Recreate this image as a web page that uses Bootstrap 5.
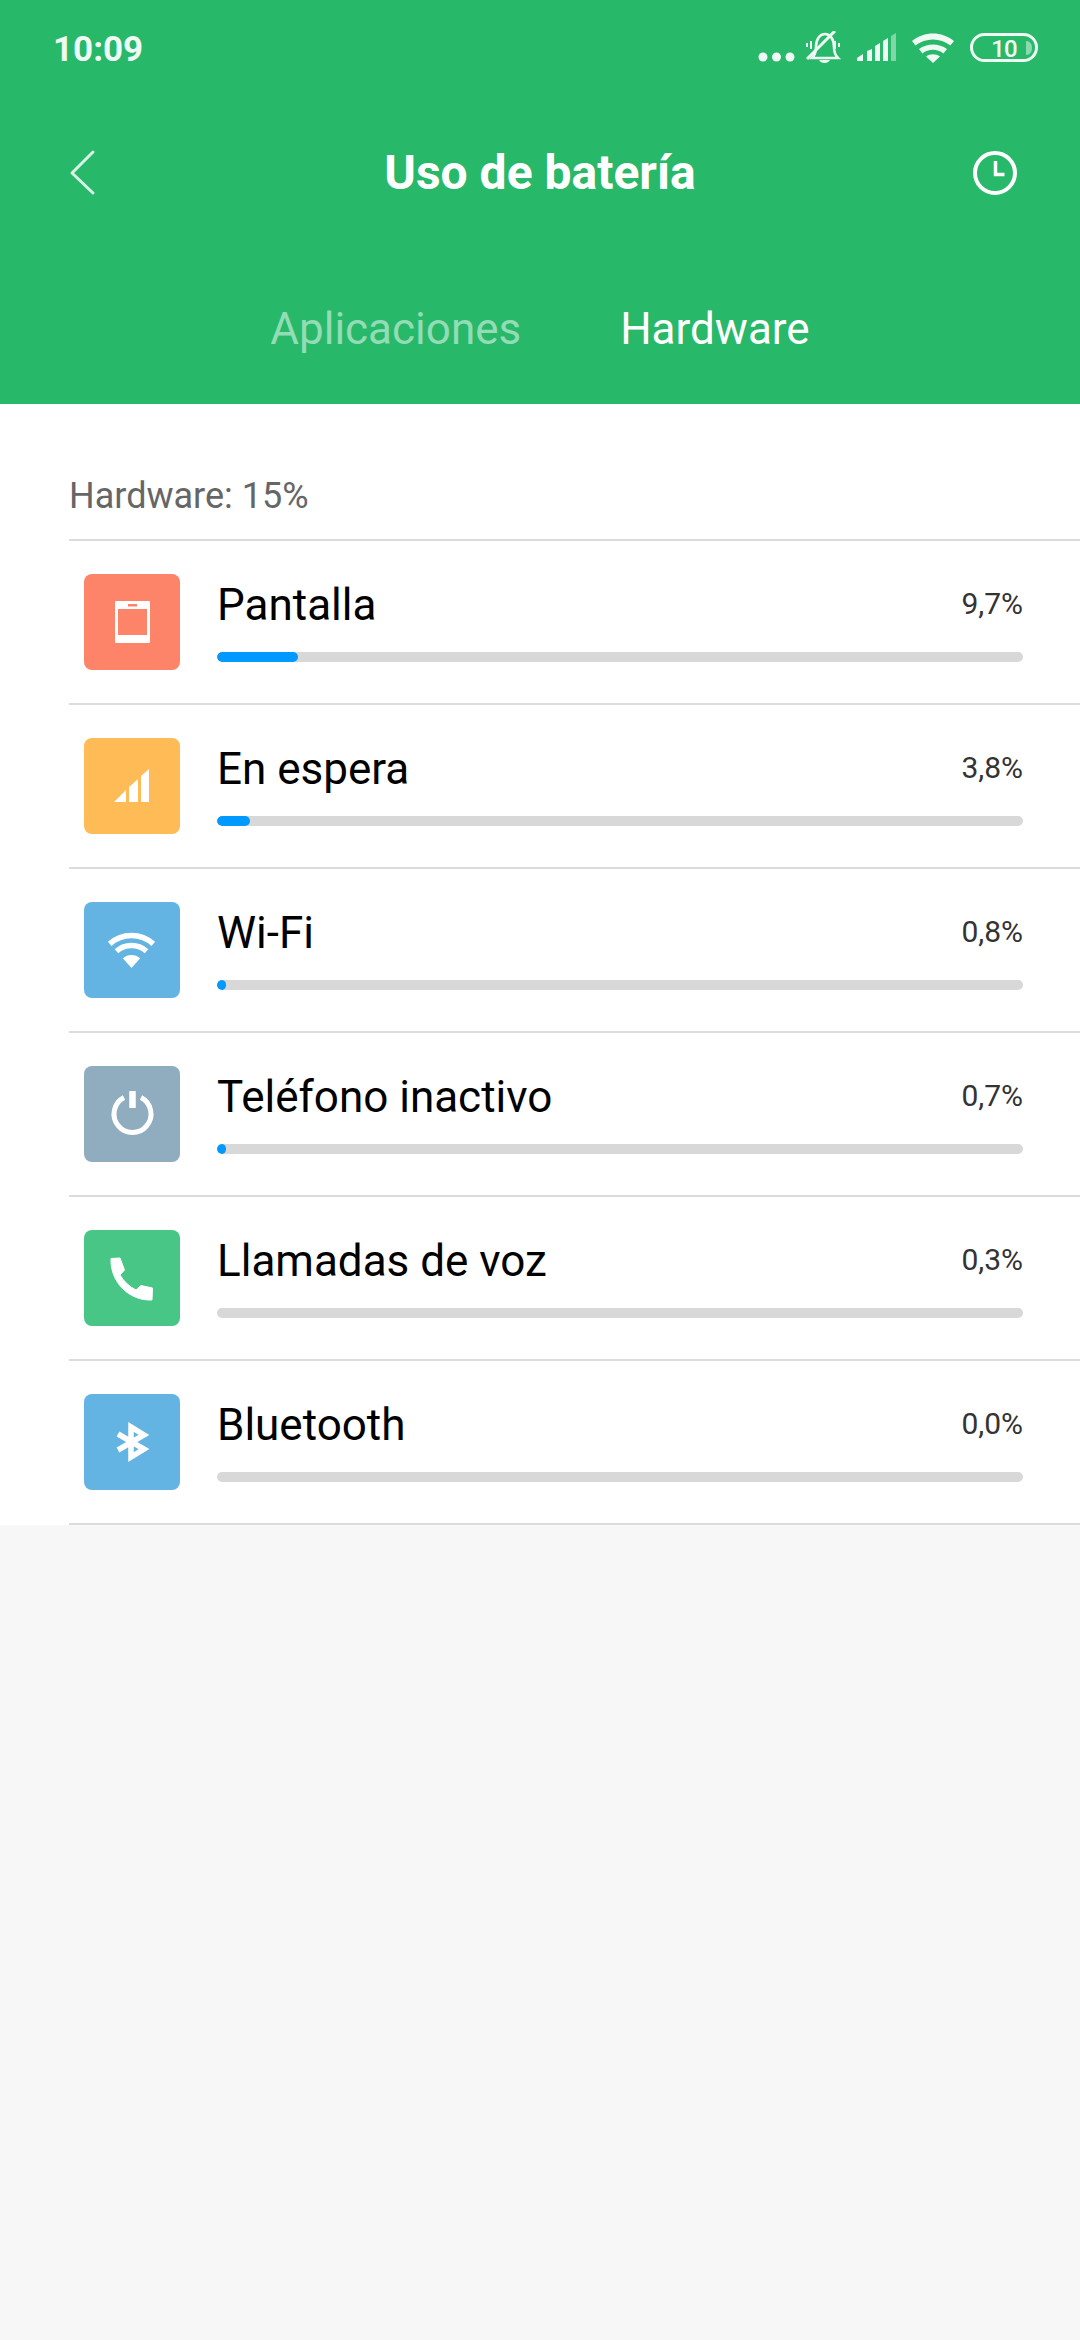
<!DOCTYPE html>
<html lang="es">
<head>
  <meta charset="UTF-8" />
  <meta name="viewport" content="width=device-width, initial-scale=1.0"/>
  <title>Uso de batería</title>
  <link href="https://cdn.jsdelivr.net/npm/bootstrap@5.3.2/dist/css/bootstrap.min.css" rel="stylesheet">
  <style>
    body { background: #f7f7f7; font-family: Roboto, "Liberation Sans", sans-serif; }
    .cabecera { background: #28b869; height: 404px; color: #fff; }
    .barra-estado { height: 98px; padding: 0 42px 0 53px; }
    .hora { font-size: 35px; font-weight: 700; color: #eefaf3; line-height: 1; }
    .iconos-estado { height: 36px; }
    .barra-titulo { height: 150px; padding: 0 61px 0 69px; }
    .barra-titulo h1 { font-size: 48px; font-weight: 700; margin: 0; line-height: 1; }
    .pestanas { height: 156px; padding-top: 6px; gap: 99px; font-size: 44px; line-height: 1; }
    .pestana-off { color: #93dcb5; }
    .contenido { background: #fff; padding-left: 69px; }
    .resumen { height: 135px; color: #666; font-size: 36px; line-height: 1; padding-top: 74px; }
    .fila { height: 164px; border-top: 2px solid #dcdcdc; padding: 33px 0 0 15px; }
    .fila:last-child { height: 166px; border-bottom: 2px solid #dcdcdc; }
    .cuadro { width: 96px; height: 96px; border-radius: 8px; flex: none; }
    .cuerpo { margin-left: 37px; width: 806px; flex: none; padding-top: 8px; }
    .nombre { font-size: 44px; color: #000; line-height: 47px; }
    .valor { font-size: 30px; color: #333; line-height: 43px; }
    .pista { height: 10px; background: #d8d8d8; border-radius: 5px; margin-top: 23px; overflow: hidden; }
    .relleno { height: 10px; background: #0099ff; border-radius: 5px; }
  </style>
</head>
<body>

  <!-- Cabecera -->
  <header class="cabecera">
    <div class="barra-estado d-flex align-items-center justify-content-between">
      <span class="hora">10:09</span>
      <svg class="iconos-estado" width="284" height="36" viewBox="0 0 284 36" fill="#eefaf3">
        <circle cx="9" cy="26" r="4.5"/><circle cx="22.5" cy="26" r="4.5"/><circle cx="36" cy="26" r="4.5"/>
        <g fill="none" stroke="#eefaf3" stroke-width="2.6">
          <path d="M58 27c3-3 4-6 4-11 0-8 4-13 9-13s9 5 9 13c0 5 1 8 4 11z"/>
          <path d="M53 28 81 0" stroke-width="3"/>
          <path d="M57 10v8M53 12v4M81 10v8M85 12v4" stroke-width="2"/>
        </g>
        <path d="M65 29h11c-1 2-3 3-5.500 3s-4.500-1-5.500-3z"/>
        <path d="M103 30v-3l6-4v7zM113 30V20l5-2v12zM121 30V15l5-3v18zM129 30V10l5-3v23z"/>
        <path d="M137 30V5l5-3v28z" opacity=".45"/>
        <path d="M158 10c12-10 30-10 42 0l-3.600 4.500c-10-8-25-8-35 0z"/>
        <path d="M165 18c8-6 20-6 28 0l-3.600 4.500c-6-5-15-5-21 0z"/>
        <path d="M172 25.500c4-3 10-3 14 0l-7 6.500z"/>
        <rect x="217.500" y="3.500" width="65" height="26" rx="13" fill="none" stroke="#eefaf3" stroke-width="3"/>
        <path d="M272 10c4 0 6 3 6 7s-2 7-6 7z" opacity=".5"/>
        <text x="250" y="26" text-anchor="middle" letter-spacing="-1" font-family="Roboto, sans-serif" font-size="24" font-weight="500" fill="#eefaf3">10</text>
      </svg>
    </div>
    <div class="barra-titulo d-flex align-items-center justify-content-between">
      <svg width="40" height="48" viewBox="0 0 40 48" fill="none" stroke="#d9f3e4" stroke-width="3" stroke-linecap="round" stroke-linejoin="round">
        <path d="M24 3 3 24l21 20"/>
      </svg>
      <h1>Uso de batería</h1>
      <svg width="48" height="48" viewBox="0 0 48 48" fill="none" stroke="#fff" stroke-width="4">
        <circle cx="24" cy="24" r="20"/>
        <path d="M24.500 12v13.500h9" stroke-width="3.500"/>
      </svg>
    </div>
    <div class="pestanas d-flex align-items-center justify-content-center">
      <span class="pestana-off">Aplicaciones</span>
      <span>Hardware</span>
    </div>
  </header>

  <!-- Contenido -->
  <main class="contenido">
    <div class="resumen">Hardware: 15%</div>

    <div class="fila d-flex">
      <div class="cuadro" style="background:#fd8469">
        <svg width="96" height="96" viewBox="0 0 96 96" fill="#fff">
          <path fill-rule="evenodd" d="M32 27h33a1 1 0 0 1 1 1v40a1 1 0 0 1-1 1H32a1 1 0 0 1-1-1V28a1 1 0 0 1 1-1zm2 8v26h29V35zm10-5v2.500h9V30z"/>
        </svg>
      </div>
      <div class="cuerpo">
        <div class="d-flex justify-content-between"><span class="nombre">Pantalla</span><span class="valor">9,7%</span></div>
        <div class="pista"><div class="relleno" style="width:81px"></div></div>
      </div>
    </div>

    <div class="fila d-flex">
      <div class="cuadro" style="background:#ffbb55">
        <svg width="96" height="96" viewBox="0 0 96 96" fill="#fff">
          <path d="M30 64 42 52v12zM45 49l9-8v23h-9zM57 38l8-7v33h-8z"/>
        </svg>
      </div>
      <div class="cuerpo">
        <div class="d-flex justify-content-between"><span class="nombre">En espera</span><span class="valor">3,8%</span></div>
        <div class="pista"><div class="relleno" style="width:33px"></div></div>
      </div>
    </div>

    <div class="fila d-flex">
      <div class="cuadro" style="background:#63b4e2">
        <svg width="96" height="96" viewBox="0 0 96 96" fill="none" stroke="#fff" stroke-width="5.500">
          <path d="M25.750 41.850A32.500 32.500 0 0 1 69.250 41.850"/>
          <path d="M32.450 49.300A22.500 22.500 0 0 1 62.550 49.300"/>
          <path d="M47.500 66 38.800 56.300A13 13 0 0 1 56.200 56.300Z" fill="#fff" stroke="none"/>
        </svg>
      </div>
      <div class="cuerpo">
        <div class="d-flex justify-content-between"><span class="nombre">Wi-Fi</span><span class="valor">0,8%</span></div>
        <div class="pista"><div class="relleno" style="width:9px"></div></div>
      </div>
    </div>

    <div class="fila d-flex">
      <div class="cuadro" style="background:#90acbf">
        <svg width="96" height="96" viewBox="0 0 96 96" fill="none" stroke="#fff" stroke-width="5">
          <path d="M40 31.500A18.500 18.500 0 1 0 57 31.500"/>
          <path d="M48.500 25v17" stroke-width="6.500"/>
        </svg>
      </div>
      <div class="cuerpo">
        <div class="d-flex justify-content-between"><span class="nombre">Teléfono inactivo</span><span class="valor">0,7%</span></div>
        <div class="pista"><div class="relleno" style="width:9px"></div></div>
      </div>
    </div>

    <div class="fila d-flex">
      <div class="cuadro" style="background:#48c686">
        <svg width="96" height="96" viewBox="0 0 96 96" fill="#fff" stroke="#fff" stroke-linejoin="round">
          <path d="M27 28.500 36 28 40.500 40 36 45Q42 55 52 60L57 55.500 68.500 58 68 70C45 71 26 52 27 28.500Z"/>
        </svg>
      </div>
      <div class="cuerpo">
        <div class="d-flex justify-content-between"><span class="nombre">Llamadas de voz</span><span class="valor">0,3%</span></div>
        <div class="pista"></div>
      </div>
    </div>

    <div class="fila d-flex">
      <div class="cuadro" style="background:#63b4e2">
        <svg width="96" height="96" viewBox="0 0 96 96" fill="none" stroke="#fff" stroke-width="5.500">
          <path d="M34 40 60 55 47 63V33L60 41 34 56"/>
        </svg>
      </div>
      <div class="cuerpo">
        <div class="d-flex justify-content-between"><span class="nombre">Bluetooth</span><span class="valor">0,0%</span></div>
        <div class="pista"></div>
      </div>
    </div>
  </main>

  <script src="https://cdn.jsdelivr.net/npm/bootstrap@5.3.2/dist/js/bootstrap.bundle.min.js"></script>
</body>
</html>
